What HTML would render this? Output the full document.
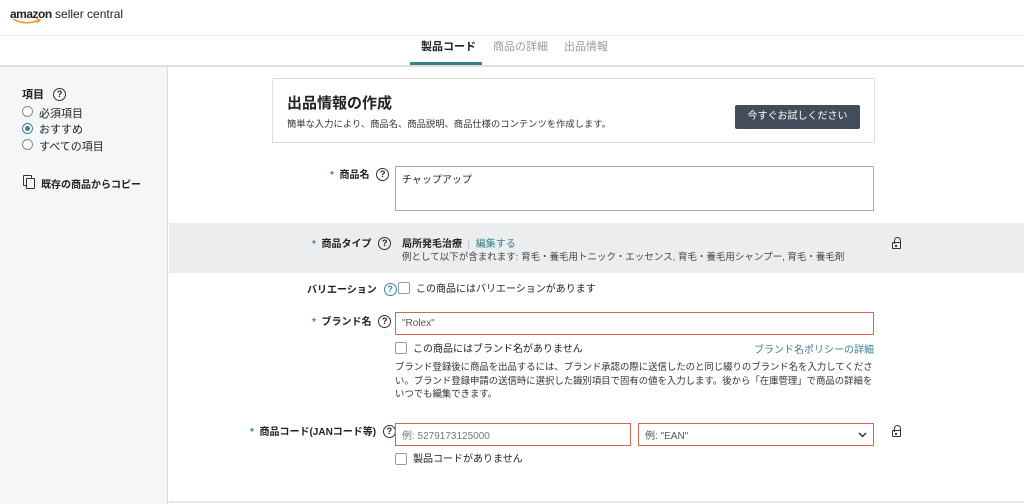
<!DOCTYPE html><html><head><meta charset="utf-8"><style>
*{margin:0;padding:0;box-sizing:border-box}
body{width:1024px;height:504px;position:relative;overflow:hidden;background:#fff;font-family:"Liberation Sans","Noto Sans CJK JP",sans-serif;color:#222;font-size:11px}
.a{position:absolute;white-space:nowrap}
.q{display:inline-block;width:13px;height:13px;border:1.3px solid #333;border-radius:50%;font-size:9px;line-height:10px;text-align:center;font-weight:bold;vertical-align:middle;position:relative;top:-1px}
.b{font-weight:bold}
.star{color:#3a8a9c}
.in{position:absolute;border:1px solid #d9644f;background:#fff;font-size:10px;color:#555;padding:0 6px;display:flex;align-items:center}
.cb{position:absolute;width:12px;height:12px;border:1px solid #999;border-radius:2px;background:#fff}
.lock{position:absolute;width:9px;height:7px;border:1.5px solid #333;border-radius:1px}
.lock:before{content:"";position:absolute;left:0.5px;top:-6px;width:5px;height:6px;border:1.5px solid #333;border-bottom:none;border-radius:4px 4px 0 0}
.lock:after{content:"";position:absolute;left:2px;top:1.5px;width:2px;height:2px;background:#333}
.rad{position:absolute;width:11px;height:11px;border:1px solid #888;border-radius:50%;background:#fff}
</style></head><body>
<div class="a" style="left:10px;top:7px;font-size:12px;color:#222"><b style="letter-spacing:-0.5px">amazon</b> seller central</div>
<svg class="a" style="left:12px;top:17px" width="30" height="8"><path d="M1 2 Q14 9 27 3" stroke="#f09a30" stroke-width="1.6" fill="none"/><path d="M24 1 L28 3 L25 6" stroke="#f09a30" stroke-width="1.3" fill="none"/></svg>
<div class="a" style="left:0;top:35px;width:1024px;height:1px;background:#f0f0f0"></div>
<div class="a b" style="left:421px;top:38px;font-size:11px">製品コード</div>
<div class="a" style="left:493px;top:38px;font-size:11px;color:#999">商品の詳細</div>
<div class="a" style="left:564px;top:38px;font-size:11px;color:#999">出品情報</div>
<div class="a" style="left:0;top:65px;width:1024px;height:2px;background:#ddd"></div>
<div class="a" style="left:410px;top:62px;width:72px;height:3px;background:#3a7f8f"></div>
<div class="a" style="left:0;top:67px;width:168px;height:437px;background:#f4f6f7;border-right:1px solid #ddd"></div>
<div class="a b" style="left:22px;top:86px">項目 <span class="q" style="margin-left:6px">?</span></div>
<div class="rad" style="left:22px;top:106px"></div><div class="a" style="left:39px;top:105px">必須項目</div>
<div class="rad" style="left:22px;top:123px;border-color:#3a7f8f"><div style="position:absolute;left:2px;top:2px;width:5px;height:5px;border-radius:50%;background:#3a7f8f"></div></div><div class="a" style="left:39px;top:121px">おすすめ</div>
<div class="rad" style="left:22px;top:139px"></div><div class="a" style="left:39px;top:138px">すべての項目</div>
<div class="a" style="left:23px;top:175px;width:9px;height:11px;border:1.5px solid #333;border-radius:1px;background:#f4f6f7"></div>
<div class="a" style="left:26px;top:178px;width:9px;height:11px;border:1.5px solid #333;border-radius:1px;background:#f4f6f7"></div>
<div class="a b" style="left:41px;top:176px;font-size:10px">既存の商品からコピー</div>
<div class="a" style="left:272px;top:78px;width:603px;height:65px;border:1px solid #ddd"></div>
<div class="a b" style="left:287px;top:92px;font-size:15px">出品情報の作成</div>
<div class="a" style="left:287px;top:116px;font-size:9.3px;color:#333">簡単な入力により、商品名、商品説明、商品仕様のコンテンツを作成します。</div>
<div class="a" style="left:735px;top:105px;width:125px;height:24px;background:#424c5a;border-radius:2px;color:#fff;font-size:10px;text-align:center;line-height:24px">今すぐお試しください</div>
<div class="a b" style="left:330px;top:166px;font-size:10px"><span class="star">*</span>&nbsp; 商品名 <span class="q" style="margin-left:4px">?</span></div>
<div class="a" style="left:395px;top:166px;width:479px;height:45px;border:1px solid #aaa;padding:4px 6px;font-size:10px">チャップアップ</div>
<div class="a" style="left:169px;top:223px;width:855px;height:50px;background:#ebedef"></div>
<div class="a b" style="left:312px;top:235px;font-size:10px"><span class="star">*</span>&nbsp; 商品タイプ <span class="q" style="margin-left:4px">?</span></div>
<div class="a" style="left:402px;top:235px;font-size:10px"><b>局所発毛治療</b> <span style="color:#bbb">&nbsp;|&nbsp;</span> <span style="color:#3a7f8f">編集する</span></div>
<div class="a" style="left:402px;top:249px;font-size:9.5px;color:#444">例として以下が含まれます: 育毛・養毛用トニック・エッセンス, 育毛・養毛用シャンプー, 育毛・養毛剤</div>
<div class="lock" style="left:892px;top:242px"></div>
<div class="a b" style="left:307px;top:281px;font-size:10px">バリエーション <span class="q" style="margin-left:4px;border-color:#3a8a9c;color:#3a8a9c">?</span></div>
<div class="cb" style="left:398px;top:282px"></div>
<div class="a" style="left:416px;top:280px;font-size:10px">この商品にはバリエーションがあります</div>
<div class="a b" style="left:312px;top:313px;font-size:10px"><span class="star">*</span>&nbsp; ブランド名 <span class="q" style="margin-left:4px">?</span></div>
<div class="in" style="left:395px;top:312px;width:479px;height:23px">"Rolex"</div>
<div class="cb" style="left:395px;top:342px"></div>
<div class="a" style="left:413px;top:340px;font-size:10px">この商品にはブランド名がありません</div>
<div class="a" style="left:754px;top:341px;font-size:10px;color:#3a7f8f">ブランド名ポリシーの詳細</div>
<div class="a" style="left:395px;top:360px;font-size:9.4px;color:#333;line-height:13.5px;white-space:normal;width:486px">ブランド登録後に商品を出品するには、ブランド承認の際に送信したのと同じ綴りのブランド名を入力してください。ブランド登録申請の送信時に選択した識別項目で固有の値を入力します。後から「在庫管理」で商品の詳細をいつでも編集できます。</div>
<div class="a b" style="left:250px;top:423px;font-size:10px"><span class="star">*</span>&nbsp; 商品コード(JANコード等) <span class="q" style="margin-left:4px">?</span></div>
<div class="in" style="left:395px;top:423px;width:236px;height:23px;color:#777">例: 5279173125000</div>
<div class="in" style="left:638px;top:423px;width:236px;height:23px;color:#555">例: "EAN"<svg style="position:absolute;right:6px;top:8px" width="9" height="6"><path d="M1 1 L4.5 4.5 L8 1" stroke="#333" stroke-width="1.5" fill="none"/></svg></div>
<div class="lock" style="left:892px;top:430px"></div>
<div class="cb" style="left:395px;top:453px"></div>
<div class="a" style="left:413px;top:450px;font-size:10px">製品コードがありません</div>
<div class="a" style="left:169px;top:501px;width:855px;height:2px;background:#e8e8e8"></div>
</body></html>
